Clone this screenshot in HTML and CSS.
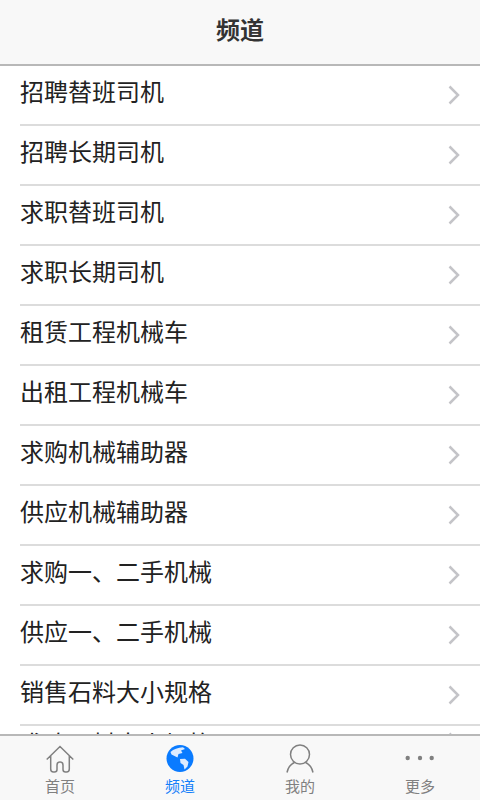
FILE: index.html
```html
<!DOCTYPE html>
<html lang="zh-CN">
<head>
  <meta charset="UTF-8" />
  <meta name="viewport" content="width=device-width, initial-scale=1.0" />
  <title>频道</title>
  <link rel="stylesheet" href="styles.css">
</head>
<body>
  <header class="top-bar">频道</header>
  <ul class="channel-list">
    <li class="channel">招聘替班司机<svg class="chevron" viewBox="0 0 12 20"><path d="M1.5 1.5 10 10 1.5 18.5"/></svg></li>
    <li class="channel">招聘长期司机<svg class="chevron" viewBox="0 0 12 20"><path d="M1.5 1.5 10 10 1.5 18.5"/></svg></li>
    <li class="channel">求职替班司机<svg class="chevron" viewBox="0 0 12 20"><path d="M1.5 1.5 10 10 1.5 18.5"/></svg></li>
    <li class="channel">求职长期司机<svg class="chevron" viewBox="0 0 12 20"><path d="M1.5 1.5 10 10 1.5 18.5"/></svg></li>
    <li class="channel">租赁工程机械车<svg class="chevron" viewBox="0 0 12 20"><path d="M1.5 1.5 10 10 1.5 18.5"/></svg></li>
    <li class="channel">出租工程机械车<svg class="chevron" viewBox="0 0 12 20"><path d="M1.5 1.5 10 10 1.5 18.5"/></svg></li>
    <li class="channel">求购机械辅助器<svg class="chevron" viewBox="0 0 12 20"><path d="M1.5 1.5 10 10 1.5 18.5"/></svg></li>
    <li class="channel">供应机械辅助器<svg class="chevron" viewBox="0 0 12 20"><path d="M1.5 1.5 10 10 1.5 18.5"/></svg></li>
    <li class="channel">求购一、二手机械<svg class="chevron" viewBox="0 0 12 20"><path d="M1.5 1.5 10 10 1.5 18.5"/></svg></li>
    <li class="channel">供应一、二手机械<svg class="chevron" viewBox="0 0 12 20"><path d="M1.5 1.5 10 10 1.5 18.5"/></svg></li>
    <li class="channel">销售石料大小规格<svg class="chevron" viewBox="0 0 12 20"><path d="M1.5 1.5 10 10 1.5 18.5"/></svg></li>
    <li class="channel peek">求购石料大小规格<svg class="chevron" viewBox="0 0 12 20"><path d="M1.5 1.5 10 10 1.5 18.5"/></svg></li>
  </ul>
  <nav class="tab-bar">
    <div class="tab">
      <svg class="tab-icon" viewBox="0 0 30 30"><path d="M1.7 15.500 15 2.500 28.300 15.500M5.700 11.500V25Q5.700 28 8.500 28H9.500Q12 28 12 25.500V21Q12 18 15 18T18 21V25.500Q18 28 20.500 28H21.500Q24.300 28 24.300 25V11.500"/></svg>
      <span>首页</span>
    </div>
    <div class="tab active">
      <svg class="tab-icon" viewBox="0 0 30 30">
        <circle class="globe" cx="15" cy="14.500" r="13.500"/>
        <path class="land" d="M5.500 8C8.500 5 13 3.500 18 3.200L20 5 16 6.500 17.500 9 13.500 10 12.500 13.500 9.500 12 6.500 10.500ZM15 15 20 14.800 23.500 18 22.500 22.500 19.500 25.500 18.500 21 15.500 19Z"/>
      </svg>
      <span>频道</span>
    </div>
    <div class="tab">
      <svg class="tab-icon" viewBox="0 0 30 30"><circle cx="15" cy="10.500" r="9.500"/><path d="M2 28.500C3 23.500 6 20 9.500 18.500M28 28.500C27 23.500 24 20 20.500 18.500"/></svg>
      <span>我的</span>
    </div>
    <div class="tab">
      <svg class="tab-icon" viewBox="0 0 30 30"><circle class="dot" cx="2.700" cy="14" r="2.200"/><circle class="dot" cx="15" cy="14" r="2.200"/><circle class="dot" cx="26.700" cy="14" r="2.200"/></svg>
      <span>更多</span>
    </div>
  </nav>
</body>
</html>
```

FILE: styles.css
```css
* { box-sizing: border-box; }
html, body { height: 100%; }
body {
  margin: 0;
  display: flex;
  flex-direction: column;
  overflow: hidden;
  background: #fff;
  color: #222;
  font-family: "Liberation Sans", "Noto Sans CJK SC", sans-serif;
}
.top-bar {
  flex: none;
  height: 66px;
  line-height: 62px;
  text-align: center;
  font-size: 24px;
  font-weight: 700;
  color: #333;
  background: #f8f8f8;
  border-bottom: 2px solid #b8b8b8;
}
.channel-list {
  flex: 1;
  min-height: 0;
  margin: 0;
  padding: 0 0 0 20px;
  list-style: none;
  overflow: hidden;
}
.channel {
  display: flex;
  align-items: center;
  justify-content: space-between;
  height: 60px;
  padding: 0 20px 10px 0;
  font-size: 24px;
  border-bottom: 2px solid #dcdcdc;
}
.channel.peek { padding-bottom: 25px; }
.chevron {
  width: 12px;
  height: 20px;
  margin-top: 10px;
  fill: none;
  stroke: #c4c4c8;
  stroke-width: 2.5;
}
.peek .chevron {
  margin-top: 0;
  margin-bottom: 1px;
}
.tab-bar {
  flex: none;
  display: flex;
  height: 66px;
  background: #f8f8f8;
  border-top: 2px solid #b8b8b8;
}
.tab {
  flex: 1;
  display: flex;
  flex-direction: column;
  align-items: center;
  padding-top: 8px;
  font-size: 15px;
  line-height: 20px;
  color: #808080;
}
.tab span { margin-top: 3px; }
.tab-icon {
  width: 30px;
  height: 30px;
  fill: none;
  stroke: #808080;
  stroke-width: 1.5;
}
.tab-icon .dot { fill: #808080; stroke: none; }
.tab.active { color: #147ffa; }
.tab-icon .globe { fill: #0a7bff; stroke: none; }
.tab-icon .land { fill: #dcebff; stroke: none; }
```
